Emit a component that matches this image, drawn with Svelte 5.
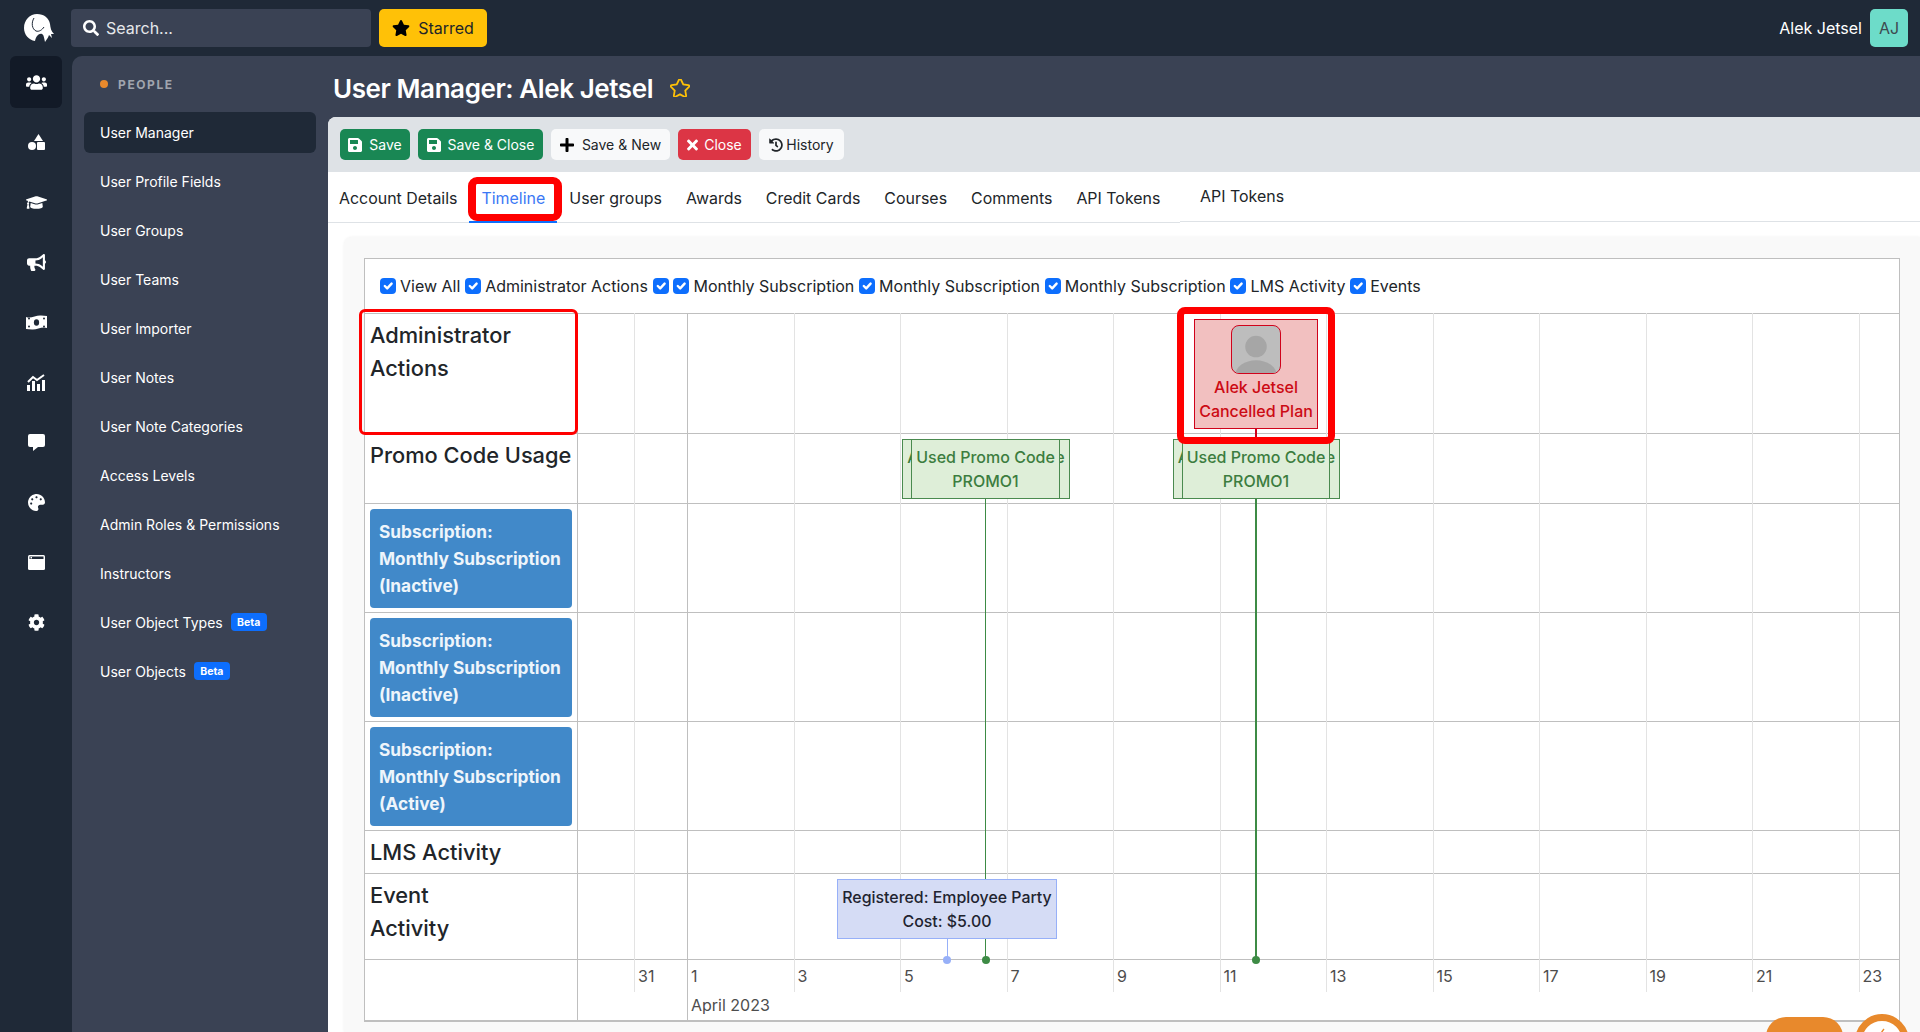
<script lang="ts">
	const railIcons = ['users', 'shapes', 'cap', 'bullhorn', 'money', 'chart', 'comment', 'palette', 'window', 'cog'];

	const navItems = [
		{ label: 'User Manager', active: true },
		{ label: 'User Profile Fields' },
		{ label: 'User Groups' },
		{ label: 'User Teams' },
		{ label: 'User Importer' },
		{ label: 'User Notes' },
		{ label: 'User Note Categories' },
		{ label: 'Access Levels' },
		{ label: 'Admin Roles & Permissions' },
		{ label: 'Instructors' },
		{ label: 'User Object Types', beta: true },
		{ label: 'User Objects', beta: true }
	];

	const tabs = ['Account Details', 'Timeline', 'User groups', 'Awards', 'Credit Cards', 'Courses', 'Comments', 'API Tokens'];

	const filters = [
		'View All',
		'Administrator Actions',
		'',
		'Monthly Subscription',
		'Monthly Subscription',
		'Monthly Subscription',
		'LMS Activity',
		'Events'
	];

	const subscriptions = ['Monthly Subscription\n(Inactive)', 'Monthly Subscription\n(Inactive)', 'Monthly Subscription\n(Active)'];

	// the canvas starts right of the label column, everything below is in page px
	const originX = 578;
	const originY = 313;
	const dayOne = 687;
	const twoDays = 106.5;

	const ticks = [1, 3, 5, 7, 9, 11, 13, 15, 17, 19, 21, 23].map((day, i) => ({
		day,
		x: dayOne + i * twoDays - originX
	}));
	const lineBefore = 634 - originX;

	const promos = [
		{ back: 902, front: 911, frontEnd: 1060, backEnd: 1070 },
		{ back: 1173, front: 1182, frontEnd: 1330, backEnd: 1340 }
	];

	const box = (x: number, y: number, w: number, h: number) =>
		`left:${x - originX}px;top:${y - originY}px;width:${w}px;height:${h}px`;
</script>

<div class="app">
	<header class="topbar">
		<div class="logo">
			<svg viewBox="0 0 30 28" width="30" height="28">
				<path fill="#fff" d="M13 0C20 0 25 4 26 10C26.500 14 27 17 30 20L27 20L28 24L25 21C24 24 23 25 21 28C20 24 20 21 18 20C15 19 12 22 11 27C5 26 0 21 0 14C0 6 6 0 13 0Z" />
				<path fill="none" stroke="#1f2937" stroke-width="1" d="M10 4C7 9 8 15 12 17C15 18 18 16 20 13" />
			</svg>
		</div>
		<div class="search">
			<svg viewBox="0 0 512 512" width="16" height="16"><path fill="#fff" d="M505 442.700L405.300 343c-4.500-4.500-10.600-7-17-7H372c27.600-35.300 44-79.700 44-128C416 93.100 322.900 0 208 0S0 93.100 0 208s93.100 208 208 208c48.300 0 92.700-16.400 128-44v16.300c0 6.400 2.500 12.500 7 17l99.700 99.700c9.400 9.400 24.600 9.400 33.900 0l28.300-28.300c9.400-9.400 9.400-24.600.1-34zM208 336c-70.700 0-128-57.200-128-128 0-70.700 57.200-128 128-128 70.700 0 128 57.200 128 128 0 70.700-57.200 128-128 128z" /></svg>
			<span>Search...</span>
		</div>
		<button class="starred">
			<svg viewBox="0 0 576 512" width="18" height="16"><path fill="#000" d="M259.300 17.800L194 150.200 47.900 171.500c-26.200 3.800-36.700 36.100-17.700 54.600l105.700 103-25 145.500c-4.500 26.300 23.200 46 46.400 33.700L288 439.600l130.700 68.700c23.200 12.200 50.900-7.400 46.400-33.700l-25-145.500 105.700-103c19-18.500 8.500-50.800-17.700-54.600L382 150.200 316.700 17.800c-11.700-23.600-45.600-23.900-57.400 0z" /></svg>
			Starred
		</button>
		<div class="user">
			<span>Alek Jetsel</span>
			<div class="avatar">AJ</div>
		</div>
	</header>

	<div class="below">
		<nav class="rail">
			{#each railIcons as icon, i}
				<div class="rail-item" class:current={i === 0}>
					{#if icon === 'users'}
						<svg viewBox="0 0 640 512" width="21" height="17"><path d="M96 224c35.300 0 64-28.700 64-64s-28.700-64-64-64-64 28.700-64 64 28.700 64 64 64zm448 0c35.300 0 64-28.700 64-64s-28.700-64-64-64-64 28.700-64 64 28.700 64 64 64zm32 32h-64c-17.600 0-33.500 7.100-45.100 18.600 40.300 22.100 68.900 62 75.100 109.400h66c17.700 0 32-14.300 32-32v-32c0-35.300-28.700-64-64-64zm-256 0c61.900 0 112-50.100 112-112S381.900 32 320 32 208 82.100 208 144s50.100 112 112 112zm76.800 32h-8.300c-20.800 10-43.900 16-68.500 16s-47.600-6-68.500-16h-8.300C179.600 288 128 339.600 128 403.200V432c0 26.500 21.500 48 48 48h288c26.500 0 48-21.500 48-48v-28.800c0-63.600-51.600-115.200-115.200-115.200zm-223.700-13.400C161.500 263.100 145.600 256 128 256H64c-35.300 0-64 28.700-64 64v32c0 17.700 14.300 32 32 32h65.900c6.300-47.400 34.900-87.300 75.200-109.400z" /></svg>
					{:else if icon === 'shapes'}
						<svg viewBox="0 0 17 16" width="17" height="16"><path d="M10.500 0L15 7H6Z" /><circle cx="4" cy="12" r="4" /><rect x="9" y="8" width="8" height="8" rx="1" /></svg>
					{:else if icon === 'cap'}
						<svg viewBox="0 0 640 512" width="21" height="17"><path d="M622.340 153.200L343.400 67.500c-15.200-4.670-31.600-4.670-46.790 0L17.660 153.200c-23.540 7.230-23.540 38.360 0 45.590l48.630 14.940c-10.670 13.190-17.230 29.280-17.880 46.900C38.780 266.150 32 276.110 32 288c0 10.780 5.680 19.850 13.860 25.650L20.330 428.530C18.110 438.520 25.710 448 35.940 448h56.110c10.240 0 17.840-9.480 15.620-19.470L82.140 313.650C90.320 307.850 96 298.780 96 288c0-11.570-6.470-21.250-15.660-26.870.76-15.020 8.440-28.300 20.690-36.720L296.600 284.500c9.060 2.780 26.440 6.250 46.790 0l278.950-85.700c23.550-7.240 23.550-38.360 0-45.600zM352.790 315.090c-28.530 8.760-52.840 3.920-65.590 0l-145.020-44.550L128 384c0 35.350 85.960 64 192 64s192-28.650 192-64l-14.180-113.470-145.030 44.560z" /></svg>
					{:else if icon === 'bullhorn'}
						<svg viewBox="0 0 576 512" width="19" height="17"><path d="M576 240c0-23.630-12.950-44.040-32-55.120V32.010C544 23.260 537.020 0 512 0c-7.120 0-14.190 2.380-19.980 7.020l-85.030 68.030C364.280 109.190 310.660 128 256 128H64c-35.350 0-64 28.650-64 64v96c0 35.350 28.650 64 64 64h33.700c-1.390 10.480-2.180 21.140-2.180 32 0 39.770 9.260 77.350 25.560 110.940 5.190 10.690 16.520 17.060 28.400 17.060h74.280c26.050 0 41.690-29.840 25.900-50.560-16.400-21.520-26.150-48.360-26.150-77.440 0-11.110 1.620-21.790 4.410-32H256c54.660 0 108.280 18.810 150.980 52.950l85.030 68.030a32.023 32.023 0 0 0 19.980 7.020c24.920 0 32-22.780 32-32V295.130C563.050 284.040 576 263.630 576 240zm-96 141.420l-33.050-26.440C392.950 311.780 325.120 288 256 288v-96c69.120 0 136.950-23.780 190.950-66.980L480 98.580v282.840z" /></svg>
					{:else if icon === 'money'}
						<svg viewBox="0 0 21 15" width="21" height="15"><path d="M0 2C5 4 10 0 15 .5C17 .7 19 1 21 1V13C16 11 11 15 6 14.500C4 14.300 2 14 0 14Z" /><ellipse cx="10.500" cy="7.500" rx="2.600" ry="3.200" fill="#1f2937" /><circle cx="3" cy="3.500" r="1" fill="#1f2937" /><circle cx="3" cy="11.500" r="1" fill="#1f2937" /><circle cx="18" cy="3.500" r="1" fill="#1f2937" /><circle cx="18" cy="11.500" r="1" fill="#1f2937" /></svg>
					{:else if icon === 'chart'}
						<svg viewBox="0 0 19 17" width="19" height="17"><path d="M1 8L6 3L10 6L17 1" fill="none" stroke="#fff" stroke-width="2" /><rect x="0" y="11" width="3" height="6" /><rect x="5" y="7" width="3" height="10" /><rect x="10" y="10" width="3" height="7" /><rect x="15" y="6" width="3" height="11" /></svg>
					{:else if icon === 'comment'}
						<svg viewBox="0 0 17 17" width="17" height="17"><rect width="17" height="13" rx="2" /><path d="M5 12V17L10 13Z" /></svg>
					{:else if icon === 'palette'}
						<svg viewBox="0 0 512 512" width="17" height="17"><path d="M204.300 5C104.900 24.400 24.800 104.300 5.200 203.400c-37 187 131.700 326.400 258.800 306.700 41.200-6.400 61.400-54.600 42.500-91.700-23.100-45.400 9.900-98.400 60.900-98.400h79.700c35.800 0 64.800-29.600 64.900-65.300C511.500 97.100 368.100-26.900 204.300 5zM96 320c-17.700 0-32-14.300-32-32s14.300-32 32-32 32 14.300 32 32-14.300 32-32 32zm32-128c-17.700 0-32-14.300-32-32s14.300-32 32-32 32 14.300 32 32-14.300 32-32 32zm128-64c-17.700 0-32-14.300-32-32s14.300-32 32-32 32 14.300 32 32-14.300 32-32 32zm128 64c-17.700 0-32-14.300-32-32s14.300-32 32-32 32 14.300 32 32-14.300 32-32 32z" /></svg>
					{:else if icon === 'window'}
						<svg viewBox="0 0 17 15" width="17" height="15"><rect width="17" height="15" rx="1.500" /><rect x="1.500" y="1.500" width="14" height="2.500" fill="#1f2937" /><rect x="2.500" y="2" width="1.500" height="1.500" /></svg>
					{:else}
						<svg viewBox="0 0 512 512" width="17" height="17"><path d="M487.400 315.700l-42.600-24.600c4.300-23.200 4.300-47 0-70.200l42.600-24.600c4.900-2.800 7.100-8.600 5.500-14-11.100-35.600-30-67.800-54.700-94.600-3.800-4.100-10-5.100-14.800-2.300L380.800 110c-17.900-15.400-38.500-27.300-60.800-35.100V25.800c0-5.600-3.900-10.500-9.400-11.700-36.700-8.200-74.300-7.800-109.200 0-5.500 1.200-9.400 6.100-9.400 11.700V75c-22.200 7.900-42.800 19.800-60.800 35.100L88.700 85.500c-4.900-2.800-11-1.900-14.800 2.300-24.700 26.700-43.600 58.900-54.700 94.600-1.700 5.400.6 11.200 5.500 14L67.300 221c-4.300 23.200-4.300 47 0 70.200l-42.600 24.600c-4.900 2.800-7.100 8.600-5.500 14 11.100 35.600 30 67.800 54.700 94.600 3.800 4.100 10 5.100 14.800 2.300l42.600-24.600c17.900 15.400 38.500 27.300 60.800 35.100v49.200c0 5.600 3.900 10.500 9.400 11.700 36.700 8.200 74.300 7.800 109.200 0 5.500-1.200 9.400-6.100 9.400-11.700v-49.200c22.200-7.900 42.800-19.800 60.800-35.100l42.600 24.600c4.900 2.800 11 1.900 14.800-2.300 24.700-26.700 43.600-58.900 54.700-94.600 1.500-5.500-.7-11.300-5.600-14.100zM256 336c-44.100 0-80-35.900-80-80s35.900-80 80-80 80 35.900 80 80-35.900 80-80 80z" /></svg>
					{/if}
				</div>
			{/each}
		</nav>

		<div class="shell">
			<aside class="sidenav">
				<div class="section"><i></i>PEOPLE</div>
				{#each navItems as item}
					<div class="nav-item" class:active={item.active}>
						{item.label}
						{#if item.beta}<span class="beta">Beta</span>{/if}
					</div>
				{/each}
			</aside>

			<main class="main">
				<div class="title-row">
					<h1>User Manager: Alek Jetsel</h1>
					<svg viewBox="0 0 576 512" width="20" height="18"><path fill="none" stroke="#ffc107" stroke-width="52" d="M259.300 17.800L194 150.200 47.900 171.500c-26.200 3.800-36.700 36.100-17.700 54.600l105.700 103-25 145.500c-4.500 26.300 23.200 46 46.400 33.700L288 439.600l130.700 68.700c23.200 12.200 50.900-7.400 46.400-33.700l-25-145.500 105.700-103c19-18.500 8.500-50.800-17.700-54.600L382 150.200 316.700 17.800c-11.700-23.600-45.600-23.900-57.400 0z" /></svg>
				</div>

				<div class="sheet">
					<div class="toolbar">
						<button class="btn green w-save">
							<svg viewBox="0 0 448 512" width="14" height="16"><path fill="#fff" d="M433.941 129.941l-83.882-83.882A48 48 0 0 0 316.118 32H48C21.490 32 0 53.490 0 80v352c0 26.510 21.490 48 48 48h352c26.510 0 48-21.490 48-48V163.882a48 48 0 0 0-14.059-33.941zM224 416c-35.346 0-64-28.654-64-64 0-35.346 28.654-64 64-64s64 28.654 64 64c0 35.346-28.654 64-64 64zm96-304.520V212c0 6.627-5.373 12-12 12H76c-6.627 0-12-5.373-12-12V108c0-6.627 5.373-12 12-12h228.520c3.183 0 6.235 1.264 8.485 3.515l3.480 3.480A11.996 11.996 0 0 1 320 111.480z" /></svg>
							Save
						</button>
						<button class="btn green w-close">
							<svg viewBox="0 0 448 512" width="14" height="16"><path fill="#fff" d="M433.941 129.941l-83.882-83.882A48 48 0 0 0 316.118 32H48C21.490 32 0 53.490 0 80v352c0 26.510 21.490 48 48 48h352c26.510 0 48-21.490 48-48V163.882a48 48 0 0 0-14.059-33.941zM224 416c-35.346 0-64-28.654-64-64 0-35.346 28.654-64 64-64s64 28.654 64 64c0 35.346-28.654 64-64 64zm96-304.520V212c0 6.627-5.373 12-12 12H76c-6.627 0-12-5.373-12-12V108c0-6.627 5.373-12 12-12h228.520c3.183 0 6.235 1.264 8.485 3.515l3.480 3.480A11.996 11.996 0 0 1 320 111.480z" /></svg>
							Save &amp; Close
						</button>
						<button class="btn light w-new">
							<svg viewBox="0 0 448 512" width="14" height="16"><path fill="#000" d="M416 208H272V64c0-17.670-14.330-32-32-32h-32c-17.670 0-32 14.330-32 32v144H32c-17.670 0-32 14.330-32 32v32c0 17.670 14.330 32 32 32h144v144c0 17.670 14.330 32 32 32h32c17.670 0 32-14.330 32-32V304h144c17.670 0 32-14.330 32-32v-32c0-17.670-14.330-32-32-32z" /></svg>
							Save &amp; New
						</button>
						<button class="btn red w-cancel">
							<svg viewBox="0 0 352 512" width="11" height="16"><path fill="#fff" d="M242.720 256l100.070-100.070c12.280-12.280 12.280-32.190 0-44.480l-22.240-22.240c-12.280-12.280-32.190-12.280-44.480 0L176 189.280 75.930 89.210c-12.280-12.280-32.190-12.280-44.480 0L9.210 111.450c-12.280 12.280-12.280 32.190 0 44.480L109.280 256 9.210 356.070c-12.280 12.280-12.280 32.190 0 44.480l22.240 22.240c12.280 12.280 32.200 12.280 44.480 0L176 322.720l100.070 100.070c12.280 12.280 32.200 12.280 44.480 0l22.240-22.240c12.280-12.280 12.280-32.190 0-44.480L242.720 256z" /></svg>
							Close
						</button>
						<button class="btn light w-history">
							<svg viewBox="0 0 512 512" width="14" height="14"><path fill="#212529" d="M504 255.531c.253 136.640-111.180 248.372-247.820 248.468-59.015.042-113.223-20.530-155.822-54.911-11.077-8.940-11.905-25.541-1.839-35.607l11.267-11.267c8.609-8.609 22.353-9.551 31.891-1.984C173.062 425.135 212.781 440 256 440c101.705 0 184-82.311 184-184 0-101.705-82.311-184-184-184-48.814 0-93.149 18.969-126.068 49.932l50.754 50.754c10.080 10.080 2.941 27.314-11.313 27.314H24c-8.837 0-16-7.163-16-16V38.627c0-14.254 17.234-21.393 27.314-11.314l49.372 49.372C129.209 34.136 189.552 8 256 8c136.810 0 247.747 110.780 248 247.531zm-180.912 78.784l9.823-12.630c8.138-10.463 6.253-25.542-4.210-33.679L288 256.349V152c0-13.255-10.745-24-24-24h-16c-13.255 0-24 10.745-24 24v135.651l65.409 50.874c10.463 8.137 25.541 6.253 33.679-4.210z" /></svg>
							History
						</button>
					</div>

					<div class="tabs">
						<div class="tab-group">
							{#each tabs as tab}
								<div class="tab" class:selected={tab === 'Timeline'}>{tab}</div>
							{/each}
							<div class="mark tab-mark"></div>
						</div>
						<div class="tab-group alt">
							<div class="tab">API Tokens</div>
						</div>
					</div>

					<div class="content">
						<section class="card">
							<div class="timeline">
								<div class="filters">
									{#each filters as filter}
										<label class="filter">
											<span class="check"><svg viewBox="0 0 20 20" width="16" height="16"><path d="M6 10l3 3 5.500-6" fill="none" stroke="#fff" stroke-width="3" stroke-linecap="round" stroke-linejoin="round" /></svg></span>
											{#if filter}<span>{filter}</span>{/if}
										</label>
									{/each}
								</div>

								<div class="tl-body">
									<div class="row h120"><div class="label big">Administrator<br />Actions</div></div>
									<div class="row h70"><div class="label big">Promo Code Usage</div></div>
									{#each subscriptions as sub}
										<div class="row h109">
											<div class="label">
												<div class="sub-card">Subscription:<br />{sub.split('\n')[0]}<br />{sub.split('\n')[1]}</div>
											</div>
										</div>
									{/each}
									<div class="row h43"><div class="label big">LMS Activity</div></div>
									<div class="row h86"><div class="label big">Event<br />Activity</div></div>
									<div class="row axis"><div class="label"></div></div>

									<div class="canvas">
										<div class="gridline short" style="left:{lineBefore}px"></div>
										<div class="axis-label" style="left:{lineBefore + 4}px">31</div>
										{#each ticks as tick}
											<div class="gridline" class:short={tick.day !== 1} class:month={tick.day === 1} style="left:{tick.x}px"></div>
											<div class="axis-label" style="left:{tick.x + 4}px">{tick.day}</div>
										{/each}
										<div class="axis-label month-label" style="left:{dayOne + 4 - originX}px">April 2023</div>

										<div class="stem green-stem" style={box(985, 499, 1, 460)}></div>
										<div class="stem green-stem" style={box(1255, 499, 2, 460)}></div>
										<div class="stem red-stem" style={box(1255, 429, 2, 10)}></div>
										<div class="stem blue-stem" style={box(947, 939, 1, 21)}></div>
										<div class="dot green-dot" style={box(982, 956, 8, 8)}></div>
										<div class="dot green-dot" style={box(1252, 956, 8, 8)}></div>
										<div class="dot blue-dot" style={box(943, 956, 8, 8)}></div>

										{#each promos as p}
											<div class="promo back" style={box(p.back, 439, p.backEnd - p.back, 60)}>Applied Promo Code<br />PROMO1</div>
											<div class="promo" style={box(p.front, 439, p.frontEnd - p.front, 60)}>Used Promo Code<br />PROMO1</div>
										{/each}

										<div class="event-card" style={box(1194, 319, 124, 110)}>
											<div class="face">
												<svg viewBox="0 0 48 48" width="48" height="47"><circle cx="24" cy="21" r="11" fill="#a6a6a6" /><ellipse cx="24" cy="50" rx="21" ry="15" fill="#a6a6a6" /></svg>
											</div>
											<div>Alek Jetsel</div>
											<div>Cancelled Plan</div>
										</div>

										<div class="registered" style={box(837, 879, 220, 60)}>Registered: Employee Party<br />Cost: $5.00</div>

										<div class="mark" style={box(359, 309, 219, 126)}></div>
										<div class="mark wide" style={box(1177, 307, 158, 137)}></div>
									</div>
								</div>
							</div>
						</section>
					</div>
				</div>
			</main>
		</div>
	</div>

	<div class="fab-pill"></div>
	<div class="fab-round">
		<svg viewBox="0 0 38 20" width="38" height="20"><path d="M20 4C17 7 16 11 16 16" fill="none" stroke="#e8892c" stroke-width="1.500" /></svg>
	</div>
</div>

<style>
	:global(body) {
		margin: 0;
		background: #ffffff;
		overflow: hidden;
	}

	.app {
		position: relative;
		width: 1920px;
		height: 1032px;
		overflow: hidden;
		display: flex;
		flex-direction: column;
		background: #1f2937;
		font-family: Inter, "Liberation Sans", sans-serif;
		font-size: 16px;
		color: #212529;
	}

	.topbar {
		height: 56px;
		flex: none;
		display: flex;
		align-items: center;
		padding-right: 12px;
		box-sizing: border-box;
	}

	.logo {
		width: 71px;
		flex: none;
		display: flex;
		justify-content: center;
		padding-left: 6px;
		box-sizing: border-box;
	}

	.search {
		width: 300px;
		height: 38px;
		margin-right: 8px;
		display: flex;
		align-items: center;
		gap: 7px;
		padding-left: 12px;
		box-sizing: border-box;
		background: #3a4254;
		border-radius: 4px;
		color: #e6e8eb;
	}

	.starred {
		width: 108px;
		height: 38px;
		display: flex;
		align-items: center;
		justify-content: center;
		gap: 8px;
		background: #ffc107;
		border: 0;
		border-radius: 5px;
		font: inherit;
		color: #212529;
	}

	.user {
		margin-left: auto;
		display: flex;
		align-items: center;
		gap: 8px;
		color: #fff;
	}

	.avatar {
		width: 38px;
		height: 38px;
		display: flex;
		align-items: center;
		justify-content: center;
		background: #6ddcc9;
		border-radius: 5px;
		color: #3d4a50;
	}

	.below {
		flex: 1;
		min-height: 0;
		display: flex;
	}

	.rail {
		width: 72px;
		flex: none;
		display: flex;
		flex-direction: column;
		gap: 8px;
		padding-left: 10px;
		box-sizing: border-box;
	}

	.rail-item {
		width: 52px;
		height: 52px;
		flex: none;
		display: flex;
		align-items: center;
		justify-content: center;
		border-radius: 6px;
	}

	.rail-item svg {
		fill: #fff;
	}

	.rail-item.current {
		background: #121a27;
	}

	.shell {
		flex: 1;
		min-width: 0;
		display: flex;
		background: #3a4254;
		border-top-left-radius: 10px;
	}

	.sidenav {
		width: 256px;
		flex: none;
		padding: 0 12px;
		box-sizing: border-box;
		color: #fff;
		font-size: 14px;
	}

	.section {
		height: 56px;
		display: flex;
		align-items: center;
		padding-left: 16px;
		gap: 10px;
		font-size: 12px;
		font-weight: 700;
		letter-spacing: 1.6px;
		color: #a0a5ae;
	}

	.section i {
		width: 8px;
		height: 8px;
		border-radius: 50%;
		background: #e8892c;
	}

	.nav-item {
		height: 41px;
		margin-bottom: 8px;
		display: flex;
		align-items: center;
		gap: 8px;
		padding-left: 16px;
		border-radius: 6px;
	}

	.nav-item.active {
		background: #1f2937;
	}

	.beta {
		height: 18px;
		width: 36px;
		display: flex;
		align-items: center;
		justify-content: center;
		margin-bottom: 1px;
		background: #0d6efd;
		border-radius: 4px;
		font-size: 10.500px;
		font-weight: 700;
	}

	.main {
		flex: 1;
		min-width: 0;
		display: flex;
		flex-direction: column;
	}

	.title-row {
		height: 61px;
		flex: none;
		display: flex;
		align-items: center;
		gap: 17px;
		padding: 3px 0 0 5px;
		box-sizing: border-box;
	}

	h1 {
		margin: 0;
		font-size: 26px;
		font-weight: 600;
		letter-spacing: -0.42px;
		color: #fff;
	}

	.sheet {
		flex: 1;
		min-height: 0;
		display: flex;
		flex-direction: column;
		background: #fff;
		border-top-left-radius: 8px;
		overflow: hidden;
	}

	.toolbar {
		height: 55px;
		flex: none;
		display: flex;
		align-items: center;
		gap: 8px;
		padding-left: 12px;
		box-sizing: border-box;
		background: #dee2e6;
	}

	.btn {
		height: 31px;
		flex: none;
		display: flex;
		align-items: center;
		justify-content: center;
		gap: 7px;
		padding: 0;
		border: 0;
		border-radius: 5px;
		font: inherit;
		font-size: 14px;
		box-sizing: border-box;
	}

	.w-save {
		width: 70px;
	}

	.w-close {
		width: 125px;
	}

	.w-new {
		width: 119px;
		gap: 8px;
	}

	.w-cancel {
		width: 73px;
		gap: 6px;
	}

	.w-history {
		width: 85px;
		gap: 3px;
	}

	.btn.green {
		background: #198754;
		color: #fff;
	}

	.btn.light {
		background: #f8f9fa;
		color: #212529;
	}

	.btn.red {
		background: #dc3545;
		color: #fff;
	}

	.tabs {
		height: 51px;
		flex: none;
		display: flex;
		margin-left: -1px;
		font-size: 15.950px;
	}

	.tab-group {
		position: relative;
		width: 853px;
		height: 51px;
		flex: none;
		display: flex;
		box-sizing: border-box;
		border-bottom: 1px solid #dee2e6;
	}

	.tab-group.alt {
		flex: 1;
		height: 50px;
		padding-left: 8px;
	}

	.tab {
		height: 51px;
		padding: 2px 12px 0;
		display: flex;
		align-items: center;
		box-sizing: border-box;
	}

	.tab-group.alt .tab {
		height: 49px;
		padding: 0 12px 1px;
	}

	.tab.selected {
		color: #3b78f5;
		border-bottom: 2px solid #0d6efd;
		padding-top: 4px;
	}

	.mark {
		position: absolute;
		box-sizing: border-box;
		border: 3px solid #ff0000;
		border-radius: 6px;
		pointer-events: none;
	}

	.mark.wide {
		border-width: 7px;
		border-radius: 8px;
	}

	.tab-mark {
		left: 141px;
		top: 5px;
		width: 94px;
		height: 44px;
		border-width: 7px 8px;
		border-radius: 9px;
	}

	.content {
		flex: 1;
		min-height: 0;
		padding: 14px 0 0 16px;
	}

	.card {
		height: 100%;
		box-sizing: border-box;
		padding: 21px 20px 0;
		background: #f9f9f9;
		border-top-left-radius: 8px;
		box-shadow: 0 0 3px rgba(0, 0, 0, 0.06);
	}

	.timeline {
		box-sizing: border-box;
		height: 764px;
		border: 1px solid #bfbfbf;
		border-bottom-width: 2px;
		background: #fff;
	}

	.filters {
		height: 54px;
		display: flex;
		align-items: center;
		gap: 4.800px;
		padding-left: 15px;
	}

	.filter {
		display: flex;
		align-items: center;
		gap: 4px;
	}

	.check {
		width: 16px;
		height: 16px;
		display: block;
		background: #0d6efd;
		border-radius: 4px;
	}

	.check svg {
		display: block;
	}

	.tl-body {
		position: relative;
	}

	.row {
		display: flex;
		box-sizing: border-box;
		border-top: 1px solid #bfbfbf;
	}

	.h120 {
		height: 120px;
	}

	.h70 {
		height: 70px;
	}

	.h109 {
		height: 109px;
	}

	.h43 {
		height: 43px;
	}

	.h86 {
		height: 86px;
	}

	.axis {
		height: 62px;
	}

	.label {
		width: 213px;
		flex: none;
		box-sizing: border-box;
		padding: 5px;
		border-right: 1px solid #bfbfbf;
	}

	.label.big {
		font-size: 21.800px;
		font-weight: 500;
		line-height: 33px;
		white-space: nowrap;
	}

	.sub-card {
		height: 99px;
		box-sizing: border-box;
		padding: 9px 9px;
		background: #4189c9;
		border-radius: 4px;
		color: #eef5fb;
		font-size: 17.300px;
		font-weight: 700;
		line-height: 27px;
		white-space: nowrap;
	}

	.canvas {
		position: absolute;
		left: 213px;
		top: 0;
		right: 0;
		bottom: 0;
	}

	.gridline {
		position: absolute;
		top: 0;
		bottom: 0;
		width: 1px;
		background: #e3e3e3;
	}

	.gridline.short {
		bottom: 29px;
	}

	.gridline.month {
		background: #bfbfbf;
	}

	.axis-label {
		position: absolute;
		top: 651px;
		line-height: 24px;
		color: #4d4d4d;
		white-space: nowrap;
	}

	.month-label {
		top: 680px;
	}

	.stem,
	.dot {
		position: absolute;
	}

	.green-stem {
		background: #3d8b45;
	}

	.red-stem {
		background: #d0021b;
	}

	.blue-stem {
		background: #97b0f8;
	}

	.dot {
		border-radius: 50%;
	}

	.green-dot {
		background: #3d8b45;
	}

	.blue-dot {
		background: #97b0f8;
	}

	.promo {
		position: absolute;
		box-sizing: border-box;
		display: block;
		padding-top: 5px;
		text-align: center;
		line-height: 24px;
		font-weight: 500;
		white-space: nowrap;
		background: #deeed8;
		border: 1px solid #4a8a4f;
		color: #3c7d3f;
	}

	.event-card {
		position: absolute;
		box-sizing: border-box;
		display: flex;
		flex-direction: column;
		align-items: center;
		padding-top: 5px;
		background: #f2c0c0;
		border: 1px solid #d0021b;
		color: #cc0a14;
		font-weight: 500;
		line-height: 24px;
		white-space: nowrap;
	}

	.face {
		width: 50px;
		height: 49px;
		box-sizing: border-box;
		flex: none;
		margin-bottom: 1px;
		background: #bdbdbd;
		border: 1px solid #d0021b;
		border-radius: 8px;
		overflow: hidden;
	}

	.face svg {
		display: block;
	}

	.registered {
		position: absolute;
		box-sizing: border-box;
		padding-top: 6px;
		text-align: center;
		line-height: 24px;
		font-size: 15.900px;
		font-weight: 500;
		white-space: nowrap;
		background: #d5dcf5;
		border: 1px solid #97b0f8;
		color: #1f2430;
	}

	.fab-pill {
		position: absolute;
		left: 1766px;
		top: 1017px;
		width: 77px;
		height: 40px;
		border-radius: 20px;
		background: #e8892c;
	}

	.fab-round {
		position: absolute;
		left: 1855px;
		top: 1014px;
		width: 54px;
		height: 54px;
		box-sizing: border-box;
		padding: 4px 0 0 2px;
		border: 7px solid #e8892c;
		border-radius: 50%;
		background: #fff;
	}
</style>
